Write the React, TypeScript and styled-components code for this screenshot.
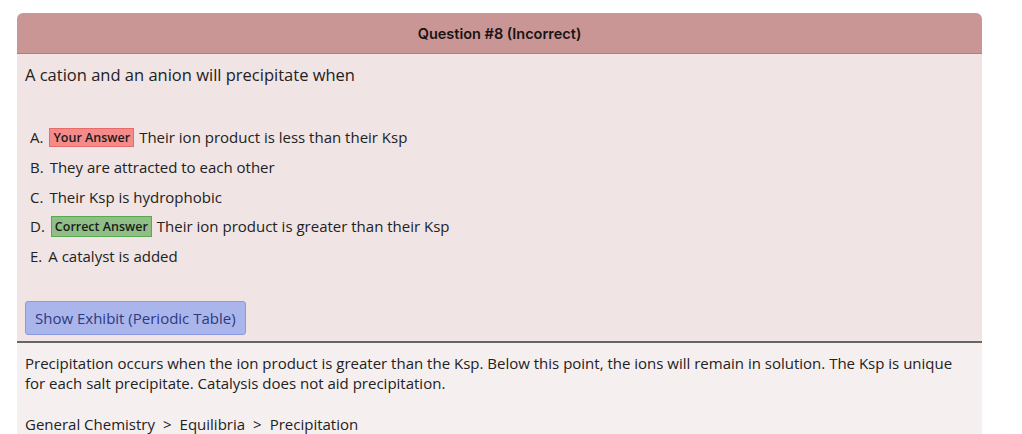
import styled, { createGlobalStyle } from 'styled-components';

const GlobalStyle = createGlobalStyle`
  html, body {
    margin: 0;
    padding: 0;
    background: #ffffff;
  }
  body {
    font-family: "Open Sans", "Liberation Sans", sans-serif;
    color: #222;
  }
`;

const Page = styled.div`
  padding: 13px 0 0 17px;
`;

const Card = styled.div`
  width: 965px;
  border-radius: 6px 6px 0 0;
  overflow: hidden;
`;

const Header = styled.div`
  height: 40px;
  background-color: #c99595;
  border-bottom: 1px solid #b07e7e;
  display: flex;
  align-items: center;
  justify-content: center;
  font-family: "Inter", "Liberation Sans", sans-serif;
  font-weight: 600;
  font-size: 14.5px;
  color: #1a1414;
`;

const QuestionBody = styled.div`
  background-color: #f0e4e4;
  padding: 10px 8px 6px 8px;
`;

const Prompt = styled.p`
  margin: 0;
  font-size: 16.5px;
  line-height: 22px;
  color: #222;
`;

const OptionList = styled.ol`
  list-style: none;
  margin: 40px 0 0 0;
  padding: 0 0 0 5px;
  display: flex;
  flex-direction: column;
  gap: 7.75px;
`;

const Option = styled.li`
  display: flex;
  align-items: center;
  height: 22px;
  font-size: 15px;
  color: #222;
`;

const Letter = styled.span`
  margin-right: 6px;
`;

const Badge = styled.span<{ $kind: 'wrong' | 'right' }>`
  display: inline-flex;
  align-items: center;
  height: ${(p) => (p.$kind === 'wrong' ? '17px' : '19px')};
  padding: 0 3px;
  margin-right: 5px;
  font-size: 12.5px;
  font-weight: 600;
  color: #1a1a1a;
  background-color: ${(p) => (p.$kind === 'wrong' ? '#f48b8b' : '#8fbf87')};
  border: 1px solid ${(p) => (p.$kind === 'wrong' ? '#ea6a6a' : '#5aa84f')};
`;

const ExhibitButton = styled.button`
  display: block;
  margin-top: 34px;
  height: 34px;
  padding: 0 9px;
  font-family: "Open Sans", "Liberation Sans", sans-serif;
  font-size: 15px;
  color: #2e3a7c;
  background-color: #aab5ec;
  border: 1px solid #8a9ae2;
  border-radius: 3px;
  cursor: pointer;
`;

const Explanation = styled.div`
  background-color: #f6efef;
  border-top: 2px solid #666;
  padding: 10px 8px 6px 8px;
  font-size: 15px;
  line-height: 20px;
  color: #222;
`;

const ExplanationText = styled.p`
  margin: 0;
  width: 945px;
`;

const Breadcrumb = styled.div`
  margin-top: 21px;
  display: flex;
  gap: 8px;
`;

const options = [
  { letter: 'A.', text: 'Their ion product is less than their Ksp', badge: 'wrong' as const },
  { letter: 'B.', text: 'They are attracted to each other' },
  { letter: 'C.', text: 'Their Ksp is hydrophobic' },
  { letter: 'D.', text: 'Their ion product is greater than their Ksp', badge: 'right' as const },
  { letter: 'E.', text: 'A catalyst is added' },
];

export default function App() {
  return (
    <Page>
      <GlobalStyle />
      <Card>
        <Header>Question #8 (Incorrect)</Header>
        <QuestionBody>
          <Prompt>A cation and an anion will precipitate when</Prompt>
          <OptionList>
            {options.map((o) => (
              <Option key={o.letter}>
                <Letter>{o.letter}</Letter>
                {o.badge && (
                  <Badge $kind={o.badge}>
                    {o.badge === 'wrong' ? 'Your Answer' : 'Correct Answer'}
                  </Badge>
                )}
                {o.text}
              </Option>
            ))}
          </OptionList>
          <ExhibitButton>Show Exhibit (Periodic Table)</ExhibitButton>
        </QuestionBody>
        <Explanation>
          <ExplanationText>
            Precipitation occurs when the ion product is greater than the Ksp. Below this point, the ions
            will remain in solution. The Ksp is unique for each salt precipitate. Catalysis does not aid
            precipitation.
          </ExplanationText>
          <Breadcrumb>
            <span>General Chemistry</span>
            <span>&gt;</span>
            <span>Equilibria</span>
            <span>&gt;</span>
            <span>Precipitation</span>
          </Breadcrumb>
        </Explanation>
      </Card>
    </Page>
  );
}
